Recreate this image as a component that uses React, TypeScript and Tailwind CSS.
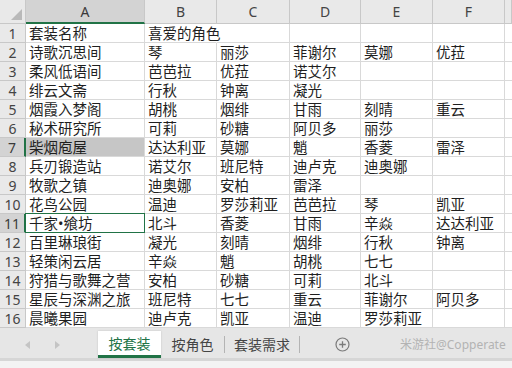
import React from 'react';

const cols = ['A', 'B', 'C', 'D', 'E', 'F', ''];

const rows: string[][] = [
    ['套装名称', '喜爱的角色', '', '', '', ''],
    ['诗歌沉思间', '琴', '丽莎', '菲谢尔', '莫娜', '优菈'],
    ['柔风低语间', '芭芭拉', '优菈', '诺艾尔', '', ''],
    ['绯云文斋', '行秋', '钟离', '凝光', '', ''],
    ['烟霞入梦阁', '胡桃', '烟绯', '甘雨', '刻晴', '重云'],
    ['秘术研究所', '可莉', '砂糖', '阿贝多', '丽莎', ''],
    ['柴烟庖屋', '达达利亚', '莫娜', '魈', '香菱', '雷泽'],
    ['兵刃锻造站', '诺艾尔', '班尼特', '迪卢克', '迪奥娜', ''],
    ['牧歌之镇', '迪奥娜', '安柏', '雷泽', '', ''],
    ['花鸟公园', '温迪', '罗莎莉亚', '芭芭拉', '琴', '凯亚'],
    ['千家•飨坊', '北斗', '香菱', '甘雨', '辛焱', '达达利亚'],
    ['百里琳琅街', '凝光', '刻晴', '烟绯', '行秋', '钟离'],
    ['轻策闲云居', '辛焱', '魈', '胡桃', '七七', ''],
    ['狩猎与歌舞之营', '安柏', '砂糖', '可莉', '北斗', ''],
    ['星辰与深渊之旅', '班尼特', '七七', '重云', '菲谢尔', '阿贝多'],
    ['晨曦果园', '迪卢克', '凯亚', '温迪', '罗莎莉亚', ''],
];

// rows 7 and 11 are in the selection
const selectedRows = [7, 11];

export default function App() {
    return (
        <div
            className="w-[512px] h-[368px] overflow-hidden bg-white text-[#1f1f1f]"
            style={{ fontFamily: '"Noto Sans", "Noto Sans CJK SC", sans-serif' }}
        >
            {/* Sheet grid */}
            <div className="grid grid-cols-[26px_119px_72px_73px_71px_72px_72px_1fr]">
                {/* Column header row */}
                <div className="relative h-[24px] bg-[#e9e9e9] border-r border-b border-[#c8c8c8]">
                    <div className="absolute right-[3px] bottom-[3px] w-0 h-0 border-l-[11px] border-l-transparent border-b-[11px] border-b-[#b9b9b9]" />
                </div>
                {cols.map((c, i) => (
                    <div
                        key={i}
                        className={
                            i === 0
                                ? 'h-[24px] flex items-center justify-center text-[14px] text-[#3a3a3a] bg-[#d3d3d3] border-r border-[#c8c8c8] border-b-2 border-b-[#217346]'
                                : 'h-[24px] flex items-center justify-center text-[14px] text-[#444] bg-[#e9e9e9] border-r border-b border-[#c8c8c8]'
                        }
                    >
                        {c}
                    </div>
                ))}

                {/* Data rows */}
                {rows.map((r, ri) => {
                    const n = ri + 1;
                    const sel = selectedRows.includes(n);
                    return (
                        <React.Fragment key={n}>
                            <div
                                className={
                                    sel
                                        ? 'h-[19px] flex items-center justify-center text-[14px] text-[#3a3a3a] bg-[#d3d3d3] border-b border-[#c8c8c8] border-r-2 border-r-[#217346]'
                                        : 'h-[19px] flex items-center justify-center text-[14px] text-[#444] bg-[#e9e9e9] border-r border-b border-[#c8c8c8]'
                                }
                            >
                                {n}
                            </div>
                            {r.map((v, ci) => {
                                let cls =
                                    'h-[19px] flex items-center pl-[3px] text-[14.5px] leading-none whitespace-nowrap border-r border-b border-[#d9d9d9]';
                                if (n === 1 && ci === 1) cls += ' overflow-visible border-r-transparent';
                                else cls += ' overflow-hidden';
                                if (n === 7 && ci === 0) cls += ' bg-[#c6c6c6] border-[#b8b8b8]';
                                if (n === 11 && ci === 0) cls = 'h-[19px] flex items-center pl-[3px] text-[14.5px] leading-none whitespace-nowrap overflow-hidden border border-[#217346] -mt-px -ml-px h-[20px]';
                                return (
                                    <div key={ci} className={cls}>
                                        {v}
                                    </div>
                                );
                            })}
                            <div className="h-[19px] border-b border-[#d9d9d9]" />
                        </React.Fragment>
                    );
                })}
            </div>

            {/* Sheet tabs */}
            <div className="h-[30px] bg-[#e6e6e6] flex items-stretch text-[14px] text-[#444] pt-[3px]">
                <div className="w-[98px] flex items-center pl-[25px] gap-[25px]">
                    <span className="w-0 h-0 border-y-[4px] border-y-transparent border-r-[5px] border-r-[#c4c4c4]" />
                    <span className="w-0 h-0 border-y-[4px] border-y-transparent border-l-[5px] border-l-[#c4c4c4]" />
                </div>
                <div className="w-[63px] bg-white flex items-center justify-center text-[#217346] border-b-[3px] border-[#217346] shadow-[0_0_2px_rgba(0,0,0,0.15)]">
                    按套装
                </div>
                <div className="w-[63px] flex items-center justify-center">按角色</div>
                <div className="w-px my-[5px] bg-[#b4b4b4]" />
                <div className="w-[74px] flex items-center justify-center">套装需求</div>
                <div className="w-px my-[5px] bg-[#b4b4b4]" />
                <div className="w-[84px] flex items-center justify-center">
                    <svg width="15" height="15" viewBox="0 0 15 15" className="text-[#7a7a7a]">
                        <circle cx="7.5" cy="7.5" r="6.5" fill="none" stroke="currentColor" strokeWidth="1.2" />
                        <path d="M7.5 4.2v6.6M4.2 7.5h6.6" stroke="currentColor" strokeWidth="1.3" />
                    </svg>
                </div>
                <div className="flex items-center pl-[16px] whitespace-nowrap text-[12px] text-[#b3b3b3]">米游社@Copperate</div>
            </div>

            {/* Status bar (cut off by the window) */}
            <div className="h-[10px] border-t-[3px] border-[#d6d6d6] bg-[#f3f3f3]" />
        </div>
    );
}
